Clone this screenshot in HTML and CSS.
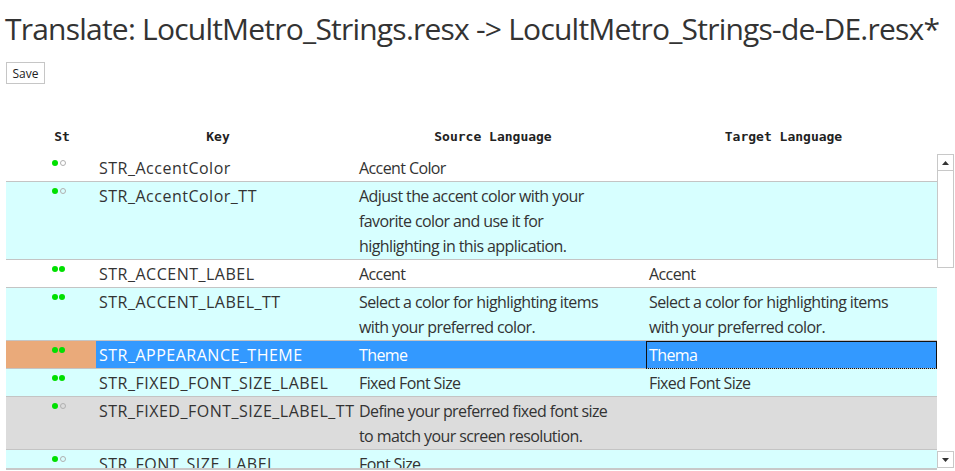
FILE: index.html
```html
<!DOCTYPE html>
<html>
<head>
<meta charset="utf-8">
<link rel="stylesheet" href="styles.css">
</head>
<body>
<h1 class="title">Translate: LocultMetro_Strings.resx -&gt; LocultMetro_Strings-de-DE.resx*</h1>
<button class="save">Save</button>
<div class="grid">
  <div class="head">
    <div class="hcell h-st">St</div>
    <div class="hcell">Key</div>
    <div class="hcell">Source Language</div>
    <div class="hcell">Target Language</div>
  </div>
  <div class="body">
    <div class="rows">
      <div class="row">
        <div class="cell st"><span class="dot on"></span><span class="dot off"></span></div>
        <div class="cell key">STR_AccentColor</div>
        <div class="cell">Accent Color</div>
        <div class="cell"></div>
      </div>
      <div class="row alt">
        <div class="cell st"><span class="dot on"></span><span class="dot off"></span></div>
        <div class="cell key">STR_AccentColor_TT</div>
        <div class="cell">Adjust the accent color with your<br>favorite color and use it for<br>highlighting in this application.</div>
        <div class="cell"></div>
      </div>
      <div class="row">
        <div class="cell st"><span class="dot on"></span><span class="dot on"></span></div>
        <div class="cell key">STR_ACCENT_LABEL</div>
        <div class="cell">Accent</div>
        <div class="cell">Accent</div>
      </div>
      <div class="row alt">
        <div class="cell st"><span class="dot on"></span><span class="dot on"></span></div>
        <div class="cell key">STR_ACCENT_LABEL_TT</div>
        <div class="cell">Select a color for highlighting items<br>with your preferred color.</div>
        <div class="cell">Select a color for highlighting items<br>with your preferred color.</div>
      </div>
      <div class="row selected">
        <div class="cell st"><span class="dot on"></span><span class="dot on"></span></div>
        <div class="cell key">STR_APPEARANCE_THEME</div>
        <div class="cell">Theme</div>
        <div class="cell focus">Thema</div>
      </div>
      <div class="row alt">
        <div class="cell st"><span class="dot on"></span><span class="dot on"></span></div>
        <div class="cell key">STR_FIXED_FONT_SIZE_LABEL</div>
        <div class="cell">Fixed Font Size</div>
        <div class="cell">Fixed Font Size</div>
      </div>
      <div class="row gray">
        <div class="cell st"><span class="dot on"></span><span class="dot off"></span></div>
        <div class="cell key">STR_FIXED_FONT_SIZE_LABEL_TT</div>
        <div class="cell">Define your preferred fixed font size<br>to match your screen resolution.</div>
        <div class="cell"></div>
      </div>
      <div class="row alt">
        <div class="cell st"><span class="dot on"></span><span class="dot off"></span></div>
        <div class="cell key">STR_FONT_SIZE_LABEL</div>
        <div class="cell">Font Size</div>
        <div class="cell"></div>
      </div>
    </div>
    <div class="vscroll">
      <div class="sbtn"><svg width="7" height="4" viewBox="0 0 7 4"><path d="M0 4 L3.5 0 L7 4 Z" fill="#333"/></svg></div>
      <div class="thumb"></div>
      <div class="track"></div>
      <div class="sbtn"><svg width="7" height="4" viewBox="0 0 7 4"><path d="M0 0 L3.5 4 L7 0 Z" fill="#333"/></svg></div>
    </div>
  </div>
  <div class="hline"></div>
</div>
</body>
</html>
```
FILE: styles.css
```css
html, body {
  margin: 0;
  padding: 0;
  background: #fff;
}
body {
  font-family: "Open Sans", "Noto Sans", sans-serif;
  color: #333;
  width: 955px;
  height: 471px;
  overflow: hidden;
}
.title {
  margin: 0;
  padding: 9px 0 0 5px;
  font-size: 30px;
  font-weight: 400;
  letter-spacing: -0.78px;
  line-height: 40px;
  white-space: nowrap;
  color: #333;
}
.save {
  display: block;
  margin: 13px 0 0 6px;
  width: 39px;
  height: 22px;
  padding: 0;
  border: 1px solid #c6c6c6;
  background: #fff;
  font-family: "Open Sans", sans-serif;
  font-size: 12px;
  color: #222;
}
.grid {
  margin: 38px 0 0 6px;
  width: 948px;
}
.head {
  display: grid;
  grid-template-columns: 90px 260px 290px 291px;
  height: 32px;
  font-family: "DejaVu Sans Mono", monospace;
  font-weight: bold;
  font-size: 13px;
  color: #222;
}
.hcell {
  text-align: center;
  padding: 2px 16px 0 0;
  line-height: 26px;
}
.h-st {
  padding: 2px 0 0 22px;
}
.body {
  display: flex;
  height: 314px;
}
.rows {
  width: 931px;
  overflow: hidden;
}
.row {
  display: grid;
  grid-template-columns: 90px 260px 290px 291px;
  border-bottom: 1px solid #c4c4c4;
  background: #fff;
}
.row.alt {
  background: #d7ffff;
}
.row.gray {
  background: #dcdcdc;
}
.cell {
  padding: 2px 0 0 3px;
  font-size: 16px;
  letter-spacing: -0.6px;
  line-height: 25px;
  white-space: nowrap;
}
.cell.key {
  letter-spacing: 0.5px;
}
.cell.st {
  padding: 6px 0 0 15px;
  line-height: 6px;
  text-align: center;
}
.dot {
  display: inline-block;
  width: 6px;
  height: 6px;
  border-radius: 50%;
  vertical-align: top;
  box-sizing: border-box;
}
.dot.on {
  background: #00e000;
}
.dot.off {
  margin-left: 2px;
  border: 1px solid #b0b0b0;
  background: transparent;
}
.dot.on + .dot.on {
  margin-left: 1px;
}
.row.selected {
  background: #3399ff;
  color: #fff;
}
.row.selected .st {
  background: #eaaa7a;
}
.cell.focus {
  border: 1px solid #111;
  border-bottom-style: dotted;
  padding: 1px 0 0 2px;
  margin-bottom: -1px;
}
.vscroll {
  width: 17px;
  display: flex;
  flex-direction: column;
}
.sbtn {
  height: 17px;
  box-sizing: border-box;
  border: 1px solid #c8c8c8;
  display: flex;
  align-items: center;
  justify-content: center;
}
.thumb {
  height: 97px;
  box-sizing: border-box;
  border: 1px solid #c8c8c8;
  border-top: none;
}
.track {
  flex: 1;
}
.hline {
  width: 931px;
  height: 2px;
  background: #c8c8c8;
}
```
